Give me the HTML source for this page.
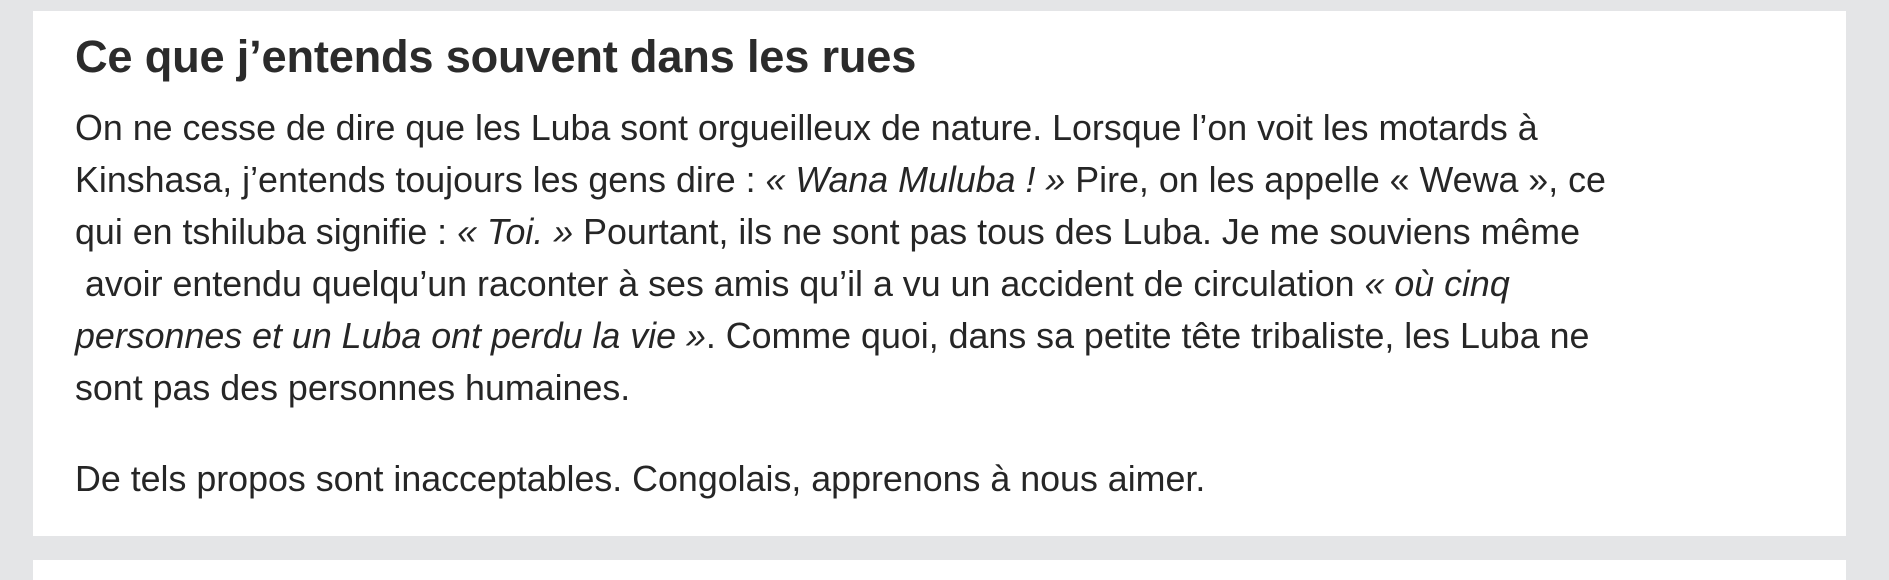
<!DOCTYPE html>
<html><head><meta charset="utf-8"><style>
html,body{margin:0;padding:0;width:1889px;height:569px;overflow:hidden;background:#e4e5e7;font-family:"Liberation Sans",Arial,sans-serif;}
.card{position:absolute;left:33px;top:11px;width:1813px;height:525px;background:#fff;}
.card2{position:absolute;left:33px;top:560px;width:1813px;height:20px;background:#fff;}
h1{position:absolute;left:42px;top:20px;margin:0;font-size:45.2px;line-height:52px;font-weight:bold;color:#2b2b2b;letter-spacing:-0.2px;}
.p{position:absolute;left:42px;width:1750px;margin:0;font-size:35.8px;line-height:52px;color:#262626;white-space:nowrap;}
</style></head><body>
<div class="card">
<h1>Ce que j’entends souvent dans les rues</h1>
<div class="p" style="top:91px">On ne cesse de dire que les Luba sont orgueilleux de nature. Lorsque l’on voit les motards à<br>Kinshasa, j’entends toujours les gens dire : <i>« Wana Muluba ! »</i> Pire, on les appelle « Wewa », ce<br>qui en tshiluba signifie : <i>« Toi. »</i> Pourtant, ils ne sont pas tous des Luba. Je me souviens même<br>&nbsp;avoir entendu quelqu’un raconter à ses amis qu’il a vu un accident de circulation <i>« où cinq<br>personnes et un Luba ont perdu la vie »</i>. Comme quoi, dans sa petite tête tribaliste, les Luba ne<br>sont pas des personnes humaines.</div>
<div class="p" style="top:442px">De tels propos sont inacceptables. Congolais, apprenons à nous aimer.</div>
</div>
<div class="card2"></div>
</body></html>
